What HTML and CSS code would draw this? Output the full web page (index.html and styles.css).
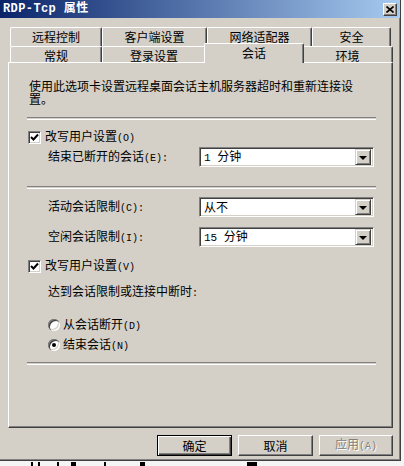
FILE: index.html
```html
<!DOCTYPE html>
<html lang="zh-CN">
<head>
<meta charset="utf-8">
<title>RDP-Tcp 属性</title>
<link rel="stylesheet" href="styles.css">
</head>
<body>
<div class="window">
  <div class="titlebar">
    <span class="title">RDP-Tcp 属性</span>
    <span class="close"><svg width="8" height="7" viewBox="0 0 8 7"><path d="M0.5 0.5 L7.5 6.5 M7.5 0.5 L0.5 6.5" stroke="#000" stroke-width="1.6" fill="none"/></svg></span>
  </div>
  <div class="tabs">
    <div class="tabrow back">
      <div class="tab w92">远程控制</div>
      <div class="tab w105">客户端设置</div>
      <div class="tab w105">网络适配器</div>
      <div class="tab w79">安全</div>
    </div>
    <div class="tabrow front">
      <div class="tab w92">常规</div>
      <div class="tab w104">登录设置</div>
      <div class="tab selected">会话</div>
      <div class="tab w91">环境</div>
    </div>
  </div>
  <div class="panel">
    <p class="desc">使用此选项卡设置远程桌面会话主机服务器超时和重新连接设<br>置。</p>
    <div class="sep s1"></div>
    <div class="check-row c1">
      <span class="checkbox"><svg width="9" height="9" viewBox="0 0 9 9"><path d="M1 4 L3.5 6.5 L8 1.5" stroke="#000" stroke-width="2" fill="none"/></svg></span>
      <span>改写用户设置<span class="key">(O)</span></span>
    </div>
    <div class="combo-row r1">
      <span class="label">结束已断开的会话<span class="key">(E):</span></span>
      <div class="combo"><span class="value"><span class="key">1 </span>分钟</span><span class="arrow"><i></i></span></div>
    </div>
    <div class="sep s2"></div>
    <div class="combo-row r2">
      <span class="label">活动会话限制<span class="key">(C):</span></span>
      <div class="combo"><span class="value">从不</span><span class="arrow"><i></i></span></div>
    </div>
    <div class="combo-row r3">
      <span class="label">空闲会话限制<span class="key">(I):</span></span>
      <div class="combo"><span class="value"><span class="key">15 </span>分钟</span><span class="arrow"><i></i></span></div>
    </div>
    <div class="check-row c2">
      <span class="checkbox"><svg width="9" height="9" viewBox="0 0 9 9"><path d="M1 4 L3.5 6.5 L8 1.5" stroke="#000" stroke-width="2" fill="none"/></svg></span>
      <span>改写用户设置<span class="key">(V)</span></span>
    </div>
    <p class="sub">达到会话限制或连接中断时<span class="key">:</span></p>
    <div class="radio-row o1"><span class="radio"></span><span>从会话断开<span class="key">(D)</span></span></div>
    <div class="radio-row o2"><span class="radio on"></span><span>结束会话<span class="key">(N)</span></span></div>
    <div class="sep s3"></div>
  </div>
  <div class="buttons">
    <button class="btn default">确定</button>
    <button class="btn">取消</button>
    <button class="btn disabled">应用<span class="key">(A)</span></button>
  </div>
</div>
<div class="behind">
  <i class="m1"></i><i class="m2"></i><i class="m3"></i><i class="m4"></i><i class="m5"></i><i class="m6"></i><i class="m7"></i>
</div>
</body>
</html>
```

FILE: styles.css
```css
html, body {
  margin: 0;
  padding: 0;
}
body {
  width: 404px;
  height: 466px;
  overflow: hidden;
  background: #f4f4f4;
  font-family: "Noto Sans CJK SC", "Noto Sans", sans-serif;
  font-size: 12px;
  line-height: 12px;
  color: #000;
}
.window {
  width: 401px;
  height: 461px;
  box-sizing: border-box;
  background: #d4d0c8;
  border-right: 1px solid #404040;
  border-bottom: 1px solid #404040;
  box-shadow: inset -1px -1px 0 #808080;
  display: flex;
  flex-direction: column;
}
.titlebar {
  height: 18px;
  flex: none;
  display: flex;
  align-items: center;
  padding-left: 3px;
  background: linear-gradient(to right, #0a246a, #a6caf0);
  color: #fff;
}
.title {
  font-family: "Liberation Mono", "Noto Sans CJK SC", monospace;
  font-weight: bold;
  font-size: 12px;
  letter-spacing: 0.4px;
}
.close {
  margin-left: auto;
  margin-right: 3px;
  width: 14px;
  height: 13px;
  box-sizing: border-box;
  background: #d4d0c8;
  border-top: 1px solid #fff;
  border-left: 1px solid #fff;
  border-right: 1px solid #404040;
  border-bottom: 1px solid #404040;
  box-shadow: inset -1px -1px 0 #808080;
  display: flex;
  align-items: center;
  justify-content: center;
}
.close svg {
  display: block;
}

/* tabs */
.tabs {
  margin-top: 9px;
  margin-left: 10px;
  display: flex;
  flex-direction: column;
}
.tabrow {
  display: flex;
}
.tabrow.back {
  height: 19px;
}
.tabrow.front {
  height: 16px;
}
.tab {
  box-sizing: border-box;
  height: 100%;
  border-top: 1px solid #fff;
  border-left: 1px solid #fff;
  border-right: 1px solid #404040;
  box-shadow: inset -1px 0 0 #808080;
  border-top-left-radius: 2px;
  border-top-right-radius: 2px;
  background: #d4d0c8;
  text-align: center;
  padding-top: 3px;
}
.tabrow.front .tab {
  padding-top: 3px;
}
.w92 { width: 92px; }
.w105 { width: 105px; }
.w104 { width: 104px; }
.w79 { width: 79px; }
.w91 { width: 91px; }
.tab.selected {
  width: 100px;
  height: 20px;
  margin-top: -3px;
  margin-left: -2px;
  margin-right: -2px;
  position: relative;
  z-index: 2;
  padding-top: 4px;
}

/* panel */
.panel {
  margin-left: 8px;
  width: 385px;
  height: 366px;
  box-sizing: border-box;
  border-top: 1px solid #fff;
  border-left: 1px solid #fff;
  border-right: 1px solid #404040;
  border-bottom: 1px solid #404040;
  box-shadow: inset -1px -1px 0 #808080;
  padding-left: 18px;
  display: flex;
  flex-direction: column;
  position: relative;
  z-index: 1;
}
.desc {
  margin: 16px 0 0 2px;
  line-height: 13px;
  white-space: nowrap;
}
.sep {
  width: 349px;
  height: 1px;
  border-top: 1px solid #808080;
  border-bottom: 1px solid #fff;
}
.s1 { margin-top: 12px; }
.s2 { margin-top: 19px; }
.s3 { margin-top: 11px; }

.key {
  font-family: "Liberation Mono", monospace;
  font-size: 10px;
  white-space: pre;
}

.check-row {
  display: flex;
  align-items: center;
  height: 13px;
  margin-left: 1px;
  gap: 4px;
}
.c1 { margin-top: 11px; }
.c2 { margin-top: 13px; }
.checkbox {
  width: 13px;
  height: 13px;
  box-sizing: border-box;
  background: #fff;
  border-top: 1px solid #808080;
  border-left: 1px solid #808080;
  border-right: 1px solid #fff;
  border-bottom: 1px solid #fff;
  box-shadow: inset 1px 1px 0 #404040, inset -1px -1px 0 #d4d0c8;
  display: flex;
  align-items: center;
  justify-content: center;
}
.checkbox svg {
  display: block;
}

.combo-row {
  display: flex;
  align-items: center;
  height: 20px;
  margin-left: 21px;
}
.r1 { margin-top: 3px; }
.r2 { margin-top: 8px; }
.r3 { margin-top: 10px; }
.label {
  width: 151px;
  flex: none;
}
.combo {
  width: 175px;
  height: 20px;
  box-sizing: border-box;
  background: #fff;
  border-top: 1px solid #808080;
  border-left: 1px solid #808080;
  border-right: 1px solid #fff;
  border-bottom: 1px solid #fff;
  box-shadow: inset 1px 1px 0 #404040, inset -1px -1px 0 #d4d0c8;
  display: flex;
  align-items: center;
  padding: 2px;
}
.value {
  flex: 1;
  padding-left: 2px;
}
.value .key {
  font-size: 11px;
}
.arrow {
  width: 16px;
  height: 16px;
  box-sizing: border-box;
  background: #d4d0c8;
  border-top: 1px solid #d4d0c8;
  border-left: 1px solid #d4d0c8;
  border-right: 1px solid #404040;
  border-bottom: 1px solid #404040;
  box-shadow: inset 1px 1px 0 #fff, inset -1px -1px 0 #808080;
  display: flex;
  align-items: center;
  justify-content: center;
}
.arrow i {
  width: 0;
  height: 0;
  border-left: 4px solid transparent;
  border-right: 4px solid transparent;
  border-top: 4px solid #000;
  margin-top: 1px;
}

.sub {
  margin: 12px 0 0 21px;
  line-height: 12px;
}
.radio-row {
  display: flex;
  align-items: center;
  height: 12px;
  margin-left: 21px;
  gap: 3px;
}
.o1 { margin-top: 19px; }
.o2 { margin-top: 8px; }
.radio {
  width: 12px;
  height: 12px;
  border-radius: 50%;
  background: #fff;
  box-shadow: inset 1px 1px 0 #808080, inset 2px 2px 0 #404040, inset -1px -1px 0 #fff, inset -2px -2px 0 #d4d0c8;
  display: flex;
  align-items: center;
  justify-content: center;
}
.radio.on::after {
  content: "";
  width: 4px;
  height: 4px;
  border-radius: 50%;
  background: #000;
}

/* buttons */
.buttons {
  margin-left: 8px;
  width: 385px;
  margin-top: 7px;
  display: flex;
  justify-content: flex-end;
  gap: 6px;
}
.btn {
  font-family: "Noto Sans CJK SC", "Noto Sans", sans-serif;
  font-size: 12px;
  line-height: 12px;
  color: #000;
  width: 75px;
  height: 21px;
  margin: 0;
  padding: 0;
  box-sizing: border-box;
  background: #d4d0c8;
  border-top: 1px solid #fff;
  border-left: 1px solid #fff;
  border-right: 1px solid #404040;
  border-bottom: 1px solid #404040;
  box-shadow: inset -1px -1px 0 #808080;
  border-radius: 0;
}
.btn.default {
  border: 1px solid #000;
  box-shadow: inset 1px 1px 0 #fff, inset -1px -1px 0 #404040, inset -2px -2px 0 #808080;
}
.btn.disabled {
  width: 74px;
  color: #808080;
  text-shadow: 1px 1px 0 #fff;
}

/* strip of the window behind */
.behind {
  height: 5px;
  position: relative;
  background: #f4f4f4;
}
.behind i {
  position: absolute;
  top: 1px;
  height: 4px;
  background: #000;
}
.m1 { left: 31px; width: 2px; }
.m2 { left: 38px; width: 2px; }
.m3 { left: 57px; width: 2px; }
.m4 { left: 71px; width: 5px; }
.m5 { left: 104px; width: 2px; }
.m6 { left: 140px; width: 5px; }
.m7 { left: 247px; width: 10px; }
```
